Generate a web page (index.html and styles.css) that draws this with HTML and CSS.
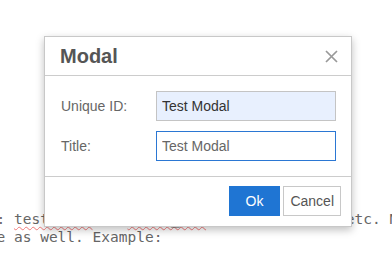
FILE: index.html
```html
<!DOCTYPE html>
<html lang="en">
<head>
    <meta charset="UTF-8">
    <meta name="viewport" content="width=device-width, initial-scale=1.0">
    <title>Modal</title>
    <link rel="stylesheet" href="styles.css">
</head>
<body>

    <!-- Page text behind the modal -->
    <pre class="doc">: <span class="typo">testmodal</span>, a <span class="typo">modal_one</span>, menus, items, etc. Names must be unique
e as well. Example:</pre>

    <!-- Modal -->
    <div class="modal">
        <div class="modal-header">
            <h2>Modal</h2>
            <button class="close" type="button">
                <svg width="13" height="13" viewBox="0 0 13 13">
                    <path d="M1 1 L12 12 M12 1 L1 12" stroke="#999" stroke-width="1.7" fill="none"/>
                </svg>
            </button>
        </div>
        <div class="modal-body">
            <label for="uid">Unique ID:</label>
            <input type="text" id="uid" class="autofill" value="Test Modal">
            <label for="title">Title:</label>
            <input type="text" id="title" class="focused" value="Test Modal">
        </div>
        <div class="modal-footer">
            <button class="btn btn-ok" type="button">Ok</button>
            <button class="btn btn-cancel" type="button">Cancel</button>
        </div>
    </div>

</body>
</html>
```

FILE: styles.css
```css
body {
    margin: 0;
    background-color: #fff;
    overflow: hidden;
}

.doc {
    margin: 210px 0 0 -3.5px;
    font-family: "DejaVu Sans Mono", monospace;
    font-size: 14.5px;
    line-height: 18px;
    color: #666;
    white-space: pre;
}

.typo {
    text-decoration: underline wavy #f07a7a;
    text-decoration-thickness: 1px;
    text-underline-offset: 2px;
}

.modal {
    position: absolute;
    left: 44px;
    top: 36px;
    width: 306px;
    background-color: #fff;
    border: 1px solid #c8c8c8;
    box-shadow: 0 3px 8px rgba(0, 0, 0, 0.25);
    font-family: "Liberation Sans", Arial, sans-serif;
}

.modal-header {
    display: flex;
    align-items: center;
    justify-content: space-between;
    padding: 8px 13px 8px 15px;
    border-bottom: 1px solid #ccc;
}

.modal-header h2 {
    margin: 0;
    font-size: 20px;
    line-height: 22px;
    font-weight: bold;
    color: #555;
}

.close {
    display: flex;
    padding: 0;
    border: none;
    background: none;
    cursor: pointer;
}

.modal-body {
    display: grid;
    grid-template-columns: 95px 180px;
    row-gap: 10px;
    align-items: center;
    padding: 15px 15px 15px 16px;
    border-bottom: 1px solid #ccc;
}

.modal-body label {
    font-size: 14px;
    color: #666;
}

.modal-body input {
    box-sizing: border-box;
    width: 180px;
    height: 30px;
    margin: 0;
    padding: 0 5px;
    border: 1px solid #c4c4c4;
    border-radius: 0;
    outline: none;
    font-family: "Liberation Sans", Arial, sans-serif;
    font-size: 14px;
    color: #333;
}

.modal-body input.autofill {
    background-color: #e8f0fe;
}

.modal-body input.focused {
    border-color: #2b77d3;
    color: #666;
}

.modal-footer {
    display: flex;
    justify-content: flex-end;
    gap: 3px;
    padding: 9px 10px 10px;
}

.btn {
    box-sizing: border-box;
    height: 30px;
    border-radius: 0;
    font-family: "Liberation Sans", Arial, sans-serif;
    font-size: 14px;
    cursor: pointer;
}

.btn-ok {
    padding: 0 16px;
    background-color: #1f75d3;
    border: 1px solid #1f75d3;
    color: #fff;
}

.btn-cancel {
    padding: 0 6px;
    background-color: #fff;
    border: 1px solid #c8c8c8;
    color: #555;
}
```
